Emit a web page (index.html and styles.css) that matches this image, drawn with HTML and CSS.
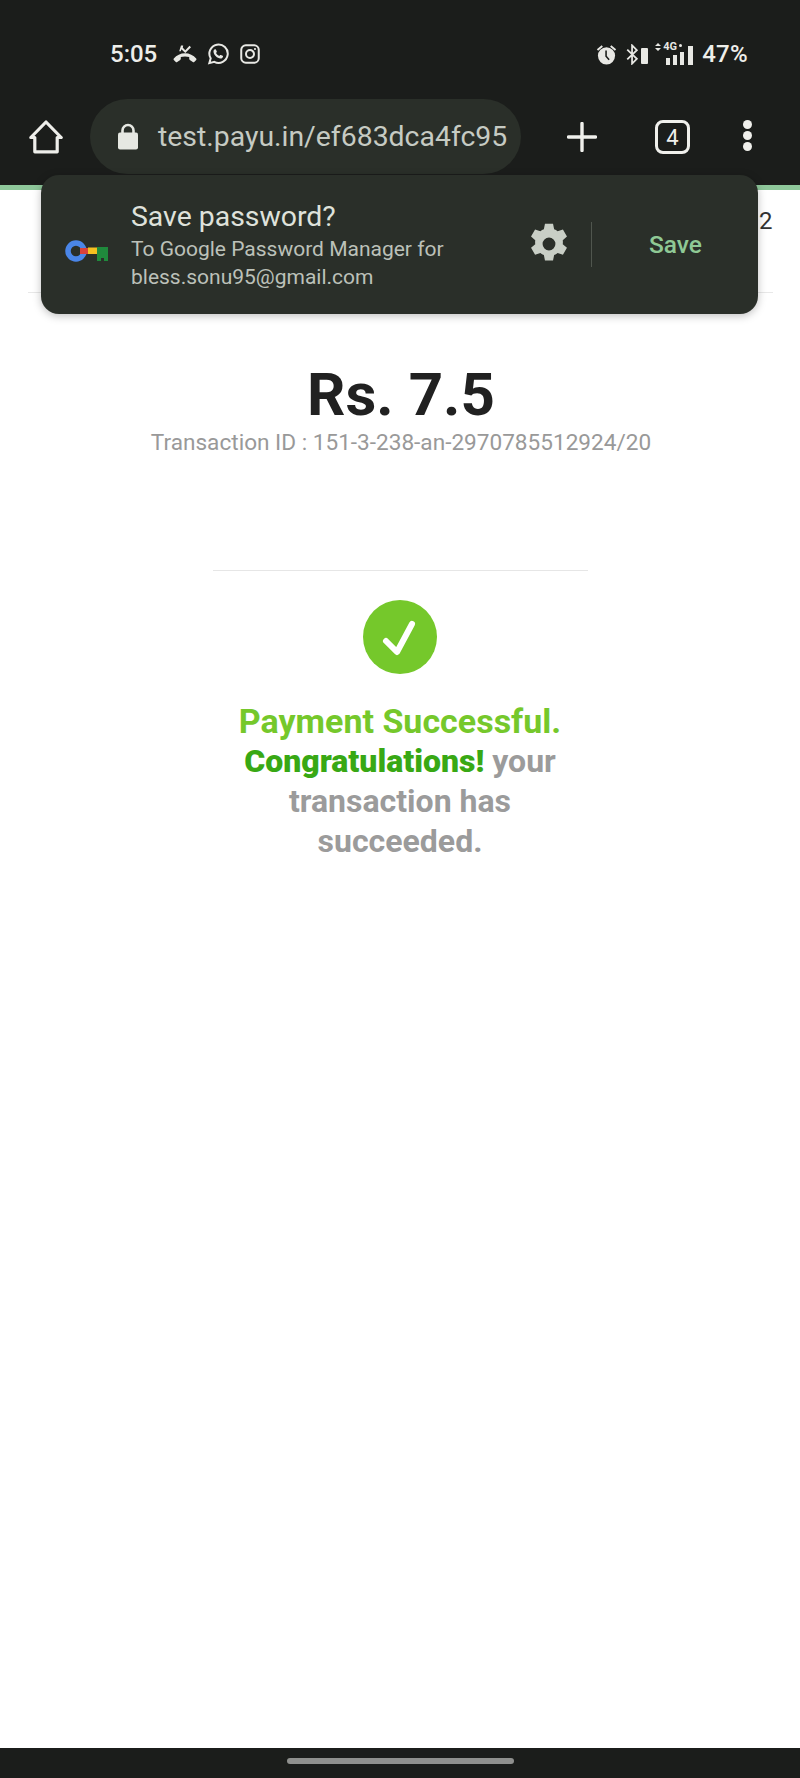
FILE: index.html
```html
<!DOCTYPE html>
<html lang="en">
 <head>
  <meta charset="UTF-8" />
  <meta name="viewport" content="width=device-width, initial-scale=1.0" />
  <title>Payment Successful</title>
  <link rel="stylesheet" href="styles.css">
 </head>
 <body>
  <div class="phone">
   <header class="chrome">
    <div class="status">
     <div class="status-left">
      <span class="time">5:05</span>
      <svg class="ico-call" viewBox="0 0 24 18" fill="#e8e8e4">
       <path d="M.8 13.500C3.600 10.300 7.600 8.300 12 8.300s8.400 2 11.200 5.200c.4.500.4 1 0 1.400l-2 2c-.4.400-1 .4-1.400.1l-3-2.100c-.4-.3-.6-.7-.6-1.100v-1.700c-2.700-.8-5.700-.8-8.400 0v1.700c0 .4-.2.800-.6 1.100l-3 2.100c-.4.300-1 .3-1.400-.1l-2-2c-.4-.4-.4-.9 0-1.400z"/>
       <path d="M8 .5h2.200L9.800 2.800 12.300 5.200 16.500 .8 18 2.200 12.300 8 8.400 4.300 7.800 6.200H6.200z"/>
      </svg>
      <svg class="ico-wa" viewBox="0 0 24 24" fill="none" stroke="#e8e8e4">
       <path stroke-width="2.200" d="M2.500 22l1.500-5.300A10 10 0 1 1 8 20.500z"/>
       <path fill="#e8e8e4" stroke="none" d="M8.800 6.800c.4 0 .8 0 1 .5l.9 2c.1.300 0 .6-.2.800l-.7.900c.8 1.500 2 2.600 3.600 3.300l.9-1.100c.2-.2.500-.3.800-.2l2 1c.3.100.5.400.4.800-.2 1.500-1.500 2.300-2.800 2.200-3.500-.4-7.300-3.900-7.600-7.500-.1-1.300.7-2.500 1.700-2.700z"/>
      </svg>
      <svg class="ico-ig" viewBox="0 0 24 24" fill="none" stroke="#e8e8e4" stroke-width="2.400">
       <rect x="1.500" y="1.500" width="21" height="21" rx="5.500"/>
       <circle cx="12" cy="12" r="4.800"/>
       <circle cx="18" cy="6" r="1.300" fill="#e8e8e4" stroke="none"/>
      </svg>
     </div>
     <div class="status-right">
      <svg class="ico-alarm" viewBox="0 0 24 24">
       <path fill="#e8e8e4" d="M6.500 1.500 1 6l1.400 1.600L7.900 3.100zM17.500 1.500 16.100 3.100l5.500 4.500L23 6z"/>
       <circle cx="12" cy="13.500" r="9.800" fill="#e8e8e4"/>
       <path d="M11.500 7.500v6.500l3.500 4" fill="none" stroke="#1b1d1b" stroke-width="1.800"/>
      </svg>
      <svg class="ico-bt" viewBox="0 0 14 24" fill="none" stroke="#e8e8e4" stroke-width="2">
       <path d="M1 6.500l11 10.500-5.500 5.500V1.500L12 7 1 17.500"/>
      </svg>
      <span class="ico-batt"></span>
      <div class="net">
       <svg class="net-arrows" viewBox="0 0 6 8" fill="#e8e8e4">
        <path d="M3 0l3 3H0zM3 8L0 5h6z"/>
       </svg>
       <span class="net-label">4G</span>
       <span class="net-dot"></span>
       <div class="bars">
        <span class="bar b1"></span>
        <span class="bar b2"></span>
        <span class="bar b3"></span>
        <span class="bar b4"></span>
       </div>
      </div>
      <span class="pct">47%</span>
     </div>
    </div>

    <div class="toolbar">
     <svg class="ico-home" viewBox="0 0 34 34" fill="none" stroke="#eeeeea" stroke-width="3.200" stroke-linejoin="round">
      <path d="M1.800 17.500 17 2l15.200 15.500h-4v14.300H5.800V17.500z"/>
     </svg>
     <div class="url-pill">
      <svg class="ico-lock" viewBox="0 0 22 27">
       <path fill="none" stroke="#e6e8e2" stroke-width="2.600" d="M5.500 11V7.500a5.500 5.500 0 0 1 11 0V11"/>
       <rect x="1" y="9.500" width="20" height="17" rx="2" fill="#e6e8e2"/>
      </svg>
      <span class="url">test.payu.in/ef683dca4fc95</span>
     </div>
     <svg class="ico-plus" viewBox="0 0 30 30" stroke="#f0f0ec" stroke-width="3.400" stroke-linecap="round">
      <path d="M15 1.500v27M1.500 15h27"/>
     </svg>
     <div class="tabs">4</div>
     <div class="dots">
      <span class="dot"></span>
      <span class="dot"></span>
      <span class="dot"></span>
     </div>
    </div>
    <div class="progress"></div>
   </header>

   <main class="page">
    <div class="top-row">
     <span class="top-num">12</span>
    </div>
    <div class="amount">Rs. 7.5</div>
    <div class="txn">Transaction ID : 151-3-238-an-2970785512924/20</div>
    <hr class="rule" />
    <div class="check">
     <svg viewBox="0 0 74 74" width="74" height="74">
      <circle cx="37" cy="37" r="37" fill="#75c82b"/>
      <path d="M23 41l11 11 15-28" fill="none" stroke="#fff" stroke-width="6" stroke-linecap="round" stroke-linejoin="round"/>
     </svg>
    </div>
    <div class="result">
     <div class="result-title">Payment Successful.</div>
     <div class="result-msg"><b>Congratulations!</b> <span>your</span></div>
     <div class="result-msg">transaction has</div>
     <div class="result-msg">succeeded.</div>
    </div>
   </main>

   <footer class="navbar">
    <span class="pill"></span>
   </footer>

   <!-- save password popup sits over the page -->
   <div class="popup">
    <svg class="ico-key" viewBox="0 0 44 22">
     <circle cx="11" cy="11" r="8" fill="none" stroke="#4a86e8" stroke-width="5.500"/>
     <rect x="15" y="8" width="8" height="6" fill="#d8423a"/>
     <rect x="23" y="7.500" width="9" height="6.500" fill="#f5c020"/>
     <path fill="#1f8a3c" d="M32 7h11v14h-4v-3h-3v3h-4z"/>
    </svg>
    <div class="popup-text">
     <div class="popup-title">Save password?</div>
     <div class="popup-sub">To Google Password Manager for<br />bless.sonu95@gmail.com</div>
    </div>
    <svg class="ico-gear" viewBox="0 0 24 24" fill="#c9cfc6">
     <path fill-rule="evenodd" d="M9.800 1h4.400l.6 3c.7.300 1.300.6 1.900 1.100l2.900-1 2.200 3.800-2.300 2c.1.700.1 1.500 0 2.200l2.300 2-2.200 3.800-2.900-1c-.6.500-1.200.8-1.900 1.100l-.6 3H9.800l-.6-3c-.7-.3-1.300-.6-1.900-1.100l-2.900 1-2.200-3.800 2.300-2c-.1-.7-.1-1.500 0-2.200l-2.300-2 2.200-3.800 2.900 1c.6-.5 1.200-.8 1.900-1.100zM12 8.500a3.500 3.500 0 1 0 0 7 3.500 3.500 0 0 0 0-7z"/>
    </svg>
    <span class="popup-sep"></span>
    <span class="popup-save">Save</span>
   </div>
  </div>
 </body>
</html>
```

FILE: styles.css
```css
* {
 box-sizing: border-box;
}

body {
 margin: 0;
 background-color: #fff;
 font-family: Roboto, "Liberation Sans", sans-serif;
}

.phone {
 position: relative;
 width: 800px;
 height: 1778px;
 display: flex;
 flex-direction: column;
 overflow: hidden;
}

.chrome {
 background-color: #1b1d1b;
 height: 190px;
 flex-shrink: 0;
 display: flex;
 flex-direction: column;
}

.status {
 height: 99px;
 padding: 43px 52px 0 110px;
 display: flex;
 justify-content: space-between;
 align-items: flex-start;
 color: #eeeeea;
}

.status-left,
.status-right {
 display: flex;
 align-items: center;
 height: 22px;
}

.time {
 font-size: 24px;
 font-weight: 500;
 margin-right: 16px;
}

.ico-call {
 width: 24px;
 height: 18px;
 margin-right: 10px;
}

.ico-wa {
 width: 22px;
 height: 22px;
 margin-right: 11px;
}

.ico-ig {
 width: 20px;
 height: 20px;
}

.ico-alarm {
 width: 21px;
 height: 21px;
 margin-right: 9px;
}

.ico-bt {
 width: 13px;
 height: 21px;
 margin-right: 2px;
}

.ico-batt {
 width: 7px;
 height: 16px;
 margin-top: 3px;
 margin-right: 7px;
 background-color: #e8e8e4;
 border-radius: 1px;
}

.net {
 position: relative;
 width: 38px;
 height: 22px;
 margin-right: 9px;
}

.net-arrows {
 position: absolute;
 left: 0;
 top: 0;
 width: 6px;
 height: 8px;
}

.net-label {
 position: absolute;
 left: 8px;
 top: -2px;
 font-size: 11px;
 line-height: 12px;
 font-weight: 700;
 color: #e8e8e4;
}

.net-dot {
 position: absolute;
 left: 24px;
 top: 1px;
 width: 3px;
 height: 3px;
 background-color: #e8e8e4;
 border-radius: 50%;
}

.bars {
 position: absolute;
 left: 11px;
 bottom: 0;
 display: flex;
 align-items: flex-end;
 gap: 3px;
}

.bar {
 width: 4px;
 background-color: #e8e8e4;
}

.b1 {
 height: 7px;
}

.b2 {
 height: 10px;
}

.b3 {
 height: 13px;
}

.b4 {
 width: 5px;
 height: 19px;
 margin-left: 1px;
}

.pct {
 font-size: 24px;
 font-weight: 500;
 letter-spacing: 0.3px;
}

.toolbar {
 height: 86px;
 display: flex;
 align-items: flex-start;
 padding-left: 29px;
}

.ico-home {
 width: 34px;
 height: 34px;
 margin-top: 21px;
 margin-right: 27px;
}

.url-pill {
 width: 431px;
 height: 75px;
 border-radius: 38px;
 background-color: #2a2f29;
 display: flex;
 align-items: center;
 padding-left: 27px;
}

.ico-lock {
 width: 22px;
 height: 27px;
 margin-right: 19px;
}

.url {
 font-size: 28.400px;
 color: #c6cbc3;
 white-space: nowrap;
}

.ico-plus {
 width: 30px;
 height: 30px;
 margin-top: 23px;
 margin-left: 46px;
}

.tabs {
 width: 35px;
 height: 34px;
 margin-top: 21px;
 margin-left: 58px;
 border: 3.500px solid #f0f0ec;
 border-radius: 8px;
 display: flex;
 align-items: center;
 justify-content: center;
 font-size: 22px;
 font-weight: 400;
 color: #f0f0ec;
}

.dots {
 margin-top: 21px;
 margin-left: 53px;
 display: flex;
 flex-direction: column;
 gap: 2px;
}

.dot {
 width: 9px;
 height: 9px;
 border-radius: 50%;
 background-color: #f0f0ec;
}

.progress {
 height: 5px;
 background-color: #8ec79a;
}

.page {
 flex: 1;
 background-color: #fff;
 display: flex;
 flex-direction: column;
 align-items: center;
}

.top-row {
 width: 745px;
 height: 103px;
 border-bottom: 1px solid #e8e8e8;
 text-align: right;
 padding-top: 17px;
}

.top-num {
 font-size: 24px;
 color: #333;
}

.amount {
 margin-top: 67px;
 padding-left: 2px;
 font-size: 60px;
 line-height: 70px;
 font-weight: 700;
 color: #212121;
}

.txn {
 margin-top: -1px;
 padding-left: 2px;
 font-size: 22.600px;
 line-height: 28px;
 color: #999;
}

.rule {
 width: 375px;
 margin: 113px 0 0;
 border: none;
 border-top: 1px solid #e6e6e6;
}

.check {
 margin-top: 29px;
 height: 74px;
}

.result {
 width: 340px;
 margin-top: 27px;
 text-align: center;
 font-size: 32px;
 line-height: 40px;
 font-weight: 700;
}

.result-title {
 font-size: 34px;
 color: #75c82b;
}

.result-msg {
 color: #9b9b9b;
}

.result-msg b {
 color: #38a814;
}

.navbar {
 height: 30px;
 flex-shrink: 0;
 background-color: #1b1d1b;
 display: flex;
 justify-content: center;
 padding-top: 10px;
}

.pill {
 width: 227px;
 height: 6px;
 border-radius: 3px;
 background-color: #8f908e;
}

.popup {
 position: absolute;
 left: 41px;
 top: 175px;
 width: 717px;
 height: 139px;
 border-radius: 18px;
 background-color: #2a2f29;
 box-shadow: 0 2px 8px rgba(0, 0, 0, 0.25);
 display: flex;
 align-items: center;
}

.ico-key {
 width: 44px;
 height: 22px;
 margin-left: 24px;
 margin-top: 12px;
}

.popup-text {
 width: 398px;
 margin-left: 22px;
 margin-top: 2px;
}

.popup-title {
 font-size: 28.400px;
 line-height: 34px;
 margin-bottom: 1px;
 color: #dfe2db;
}

.popup-sub {
 font-size: 21px;
 line-height: 28px;
 color: #bcc1b9;
}

.ico-gear {
 width: 44px;
 height: 44px;
 margin-top: -2px;
 margin-left: -2px;
}

.popup-sep {
 width: 1px;
 height: 45px;
 margin-left: 20px;
 background-color: #50564e;
}

.popup-save {
 margin-left: 57px;
 font-size: 24.500px;
 font-weight: 500;
 color: #8fc995;
}
```
